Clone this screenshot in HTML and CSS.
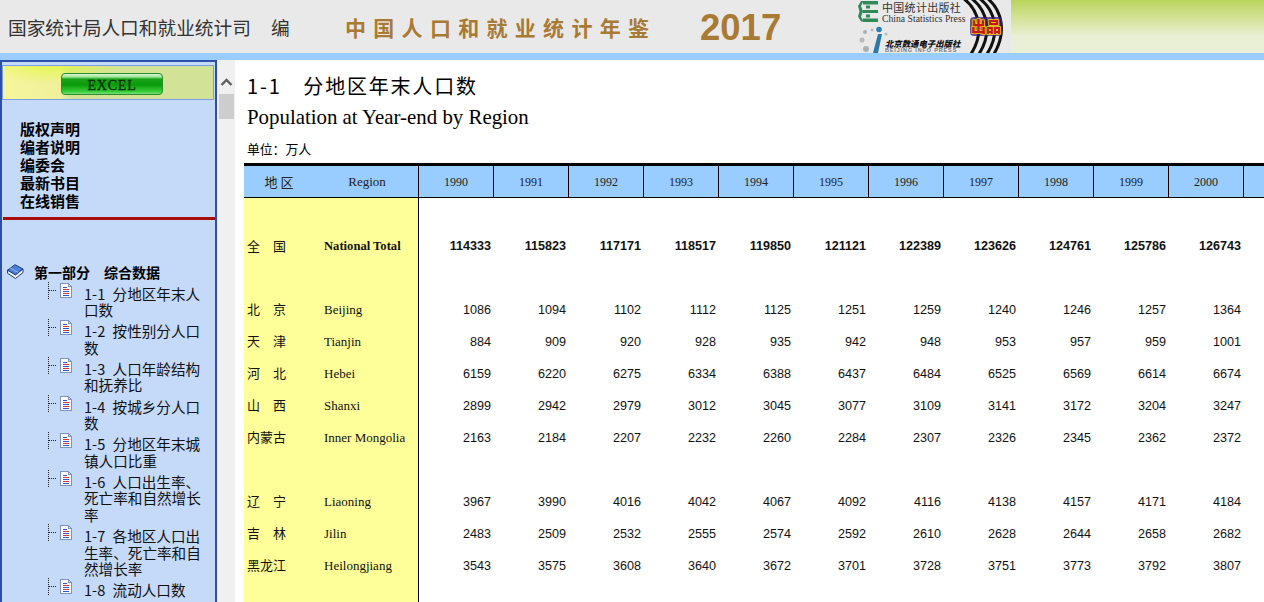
FILE: index.html
```html
<!DOCTYPE html>
<html lang="zh">
<head>
<meta charset="utf-8">
<title>中国人口和就业统计年鉴 2017</title>
<link rel="stylesheet" href="styles.css">
</head>
<body>
<svg class="defs" width="0" height="0" aria-hidden="true">
  <symbol id="doc" viewBox="0 0 26 18">
    <path d="M1.5 0v17M2 8.5h7" fill="none" stroke="#222" stroke-dasharray="1 1"/>
    <path d="M13.5 1.5h7.5l3 3v10.500h-10.500z" fill="#fff" stroke="#7d93c4"/>
    <path d="M21 1.500v3h3" fill="#cfdcf2" stroke="#7d93c4"/>
    <path d="M15.500 5.500h4" stroke="#2f55d4"/>
    <path d="M15.500 7.500h6.500" stroke="#e0303a"/>
    <path d="M15.500 9.500h6.500" stroke="#2f55d4"/>
    <path d="M15.500 11.500h6.500" stroke="#e0303a"/>
    <path d="M15.500 13.500h6.500" stroke="#2f55d4"/>
  </symbol>
</svg>
<header class="top">
  <div class="banner">
    <span class="editor">国家统计局人口和就业统计司<span class="editor-gap">编</span></span>
    <span class="yearbook">中国人口和就业统计年鉴</span>
    <span class="year">2017</span>
    <svg class="press" width="156" height="53" viewBox="0 0 156 53">
      <g fill="none" stroke="#111" stroke-width="3">
        <path d="M108 -2c16 12 22 34 8 56"/>
        <path d="M116 -2c16 12 22 34 8 56"/>
        <path d="M124 -2c16 12 22 34 8 56"/>
        <path d="M132 -2c15 12 20 34 7 56"/>
      </g>
      <g fill="#2f8a58">
        <path d="M8 1h15v3.500h-15zM8 10h15v3h-15zM8 18.500h15v3.500h-15z"/>
        <path d="M6 1h2.500l-2.500 5 2 5.500-2 5 2.500 5h-2.500l-3-5 1.500-5-1.500-5.500z"/>
        <path d="M11 5.500h4v3h-4zM11 14.500h4v3h-4z"/>
      </g>
      <text class="press-zh" x="27" y="12">中国统计出版社</text>
      <text class="press-en" x="27" y="22">China Statistics Press</text>
      <circle cx="11" cy="49" r="3" fill="#aab0b6"/>
      <circle cx="7" cy="40" r="2.500" fill="#b5babf"/>
      <circle cx="10" cy="32" r="2" fill="#aab0b6"/>
      <circle cx="17" cy="30" r="1.500" fill="#b5babf"/>
      <circle cx="24" cy="29.500" r="2.800" fill="#2c7fb5"/>
      <circle cx="31" cy="34" r="1.500" fill="#b5babf"/>
      <path d="M23 34h4l-4 19h-5z" fill="#2c78ad"/>
      <text class="press-bj" x="30" y="47">北京数通电子出版社</text>
      <text class="press-info" x="30" y="52">BEIJING INFO PRESS</text>
      <rect x="115" y="17" width="32" height="19" rx="4" fill="#3c1f80" opacity=".75"/>
      <text class="press-seal" x="116" y="32">出品</text>
    </svg>
  </div>
  <div class="banner-fill"></div>
</header>
<div class="strip"></div>
<div class="main">
  <aside class="side">
    <div class="excel-box"><a class="excel-btn">EXCEL</a></div>
    <nav class="links">
      <a>版权声明</a>
      <a>编者说明</a>
      <a>编委会</a>
      <a>最新书目</a>
      <a>在线销售</a>
    </nav>
    <hr class="rule">
    <div class="part">
      <svg width="17" height="16" viewBox="0 0 17 16">
        <path d="M8 .7l8 4.300-7.500 6-8-4.800z" fill="#4f7fd6" stroke="#1c3b80"/>
        <path d="M3 3.700l8 4.800" fill="none" stroke="#9dbcf0"/>
        <path d="M.5 6.200v3l8 5.300 7.500-6v-3.500l-7.500 6z" fill="#f2f5fd" stroke="#1c3b80"/>
      </svg>
      <b>第一部分　综合数据</b>
    </div>
    <ul class="tree">
      <li><svg class="twig"><use href="#doc"/></svg><span>1-1 分地区年末人口数</span></li>
      <li><svg class="twig"><use href="#doc"/></svg><span>1-2 按性别分人口数</span></li>
      <li><svg class="twig"><use href="#doc"/></svg><span>1-3 人口年龄结构和抚养比</span></li>
      <li><svg class="twig"><use href="#doc"/></svg><span>1-4 按城乡分人口数</span></li>
      <li><svg class="twig"><use href="#doc"/></svg><span>1-5 分地区年末城镇人口比重</span></li>
      <li><svg class="twig"><use href="#doc"/></svg><span>1-6 人口出生率、死亡率和自然增长率</span></li>
      <li><svg class="twig"><use href="#doc"/></svg><span>1-7 各地区人口出生率、死亡率和自然增长率</span></li>
      <li><svg class="twig"><use href="#doc"/></svg><span>1-8 流动人口数</span></li>
    </ul>
  </aside>
  <div class="scrollbar">
    <svg class="arrow" width="15" height="10" viewBox="0 0 15 10"><path d="M2.500 8l5-5 5 5" fill="none" stroke="#606060" stroke-width="2.400"/></svg>
    <div class="thumb"></div>
  </div>
  <main class="content">
    <h1>1-1　分地区年末人口数</h1>
    <h2>Population at Year-end by Region</h2>
    <p class="unit">单位：万人</p>
    <table class="data">
      <colgroup>
        <col class="c-zh"><col class="c-en">
        <col class="c-y"><col class="c-y"><col class="c-y"><col class="c-y"><col class="c-y"><col class="c-y">
        <col class="c-y"><col class="c-y"><col class="c-y"><col class="c-y"><col class="c-y"><col class="c-y">
      </colgroup>
      <thead>
        <tr>
          <th class="h-zh">地&nbsp;区</th><th class="h-en">Region</th>
          <th>1990</th><th>1991</th><th>1992</th><th>1993</th><th>1994</th><th>1995</th>
          <th>1996</th><th>1997</th><th>1998</th><th>1999</th><th>2000</th><th></th>
        </tr>
      </thead>
      <tbody>
        <tr class="total">
          <td class="zh">全　国</td><td class="en">National Total</td>
          <td>114333</td><td>115823</td><td>117171</td><td>118517</td><td>119850</td><td>121121</td>
          <td>122389</td><td>123626</td><td>124761</td><td>125786</td><td>126743</td><td></td>
        </tr>
        <tr>
          <td class="zh">北　京</td><td class="en">Beijing</td>
          <td>1086</td><td>1094</td><td>1102</td><td>1112</td><td>1125</td><td>1251</td>
          <td>1259</td><td>1240</td><td>1246</td><td>1257</td><td>1364</td><td></td>
        </tr>
        <tr>
          <td class="zh">天　津</td><td class="en">Tianjin</td>
          <td>884</td><td>909</td><td>920</td><td>928</td><td>935</td><td>942</td>
          <td>948</td><td>953</td><td>957</td><td>959</td><td>1001</td><td></td>
        </tr>
        <tr>
          <td class="zh">河　北</td><td class="en">Hebei</td>
          <td>6159</td><td>6220</td><td>6275</td><td>6334</td><td>6388</td><td>6437</td>
          <td>6484</td><td>6525</td><td>6569</td><td>6614</td><td>6674</td><td></td>
        </tr>
        <tr>
          <td class="zh">山　西</td><td class="en">Shanxi</td>
          <td>2899</td><td>2942</td><td>2979</td><td>3012</td><td>3045</td><td>3077</td>
          <td>3109</td><td>3141</td><td>3172</td><td>3204</td><td>3247</td><td></td>
        </tr>
        <tr>
          <td class="zh">内蒙古</td><td class="en">Inner Mongolia</td>
          <td>2163</td><td>2184</td><td>2207</td><td>2232</td><td>2260</td><td>2284</td>
          <td>2307</td><td>2326</td><td>2345</td><td>2362</td><td>2372</td><td></td>
        </tr>
        <tr>
          <td class="zh"></td><td class="en"></td>
          <td></td><td></td><td></td><td></td><td></td><td></td>
          <td></td><td></td><td></td><td></td><td></td><td></td>
        </tr>
        <tr>
          <td class="zh">辽　宁</td><td class="en">Liaoning</td>
          <td>3967</td><td>3990</td><td>4016</td><td>4042</td><td>4067</td><td>4092</td>
          <td>4116</td><td>4138</td><td>4157</td><td>4171</td><td>4184</td><td></td>
        </tr>
        <tr>
          <td class="zh">吉　林</td><td class="en">Jilin</td>
          <td>2483</td><td>2509</td><td>2532</td><td>2555</td><td>2574</td><td>2592</td>
          <td>2610</td><td>2628</td><td>2644</td><td>2658</td><td>2682</td><td></td>
        </tr>
        <tr>
          <td class="zh">黑龙江</td><td class="en">Heilongjiang</td>
          <td>3543</td><td>3575</td><td>3608</td><td>3640</td><td>3672</td><td>3701</td>
          <td>3728</td><td>3751</td><td>3773</td><td>3792</td><td>3807</td><td></td>
        </tr>
        <tr>
          <td class="zh"></td><td class="en"></td>
          <td></td><td></td><td></td><td></td><td></td><td></td>
          <td></td><td></td><td></td><td></td><td></td><td></td>
        </tr>
      </tbody>
    </table>
  </main>
</div>
</body>
</html>
```

FILE: styles.css
```css
* { box-sizing: border-box; }
html, body { height: 100%; }
body {
  margin: 0;
  overflow: hidden;
  background: #fff;
  color: #000;
  display: flex;
  flex-direction: column;
  font-family: "Noto Sans CJK SC", sans-serif;
}
.defs { position: absolute; }

/* Banner */
.top { display: flex; height: 53px; flex: none; }
.banner {
  width: 1011px;
  flex: none;
  background: #e9e9e9;
  display: flex;
  align-items: center;
  padding-left: 8px;
}
.banner-fill {
  flex: 1;
  background: linear-gradient(180deg, #b9d45c 0, #d3e296 18px, #e9efd4 36px, #eaf0d8 100%);
}
.editor { font-size: 18.7px; color: #333; width: 337px; flex: none; white-space: nowrap; }
.editor-gap { margin-left: 20px; }
.yearbook {
  font-size: 21px;
  font-weight: 700;
  letter-spacing: 7.300px;
  color: #a97a33;
  width: 355px;
  flex: none;
  white-space: nowrap;
}
.year {
  font-family: "Liberation Sans", sans-serif;
  font-size: 36.500px;
  font-weight: 700;
  color: #a97a33;
  width: 155px;
  flex: none;
  padding-top: 2px;
}
.press { flex: none; align-self: flex-start; }
.press-zh { font-family: "Noto Sans CJK SC", sans-serif; font-size: 11px; letter-spacing: .3px; fill: #333; }
.press-en { font-family: "Liberation Serif", serif; font-size: 9.700px; fill: #333; }
.press-bj { font-family: "Noto Sans CJK SC", sans-serif; font-size: 8.400px; font-weight: 900; font-style: italic; fill: #111; }
.press-info { font-family: "Liberation Sans", sans-serif; font-size: 5.500px; font-weight: 700; letter-spacing: .85px; fill: #777; }
.press-seal { font-family: "Noto Sans CJK SC", sans-serif; font-size: 15px; font-weight: 900; fill: #c8161d; stroke: #f6d400; stroke-width: 1.500px; paint-order: stroke; }
.strip { height: 7px; flex: none; background: #99ccff; }

/* Main */
.main { flex: 1; display: flex; min-height: 0; }
.side {
  width: 217px;
  flex: none;
  overflow: hidden;
  background: #c5d9f9;
  border: 2px solid #2c50a4;
  border-bottom: 0;
  border-width: 2px 2px 0 2px;
  padding-top: 3px;
}
.excel-box {
  height: 35px;
  width: 212px;
  border: 1px solid #7d9ee8;
  background:
    radial-gradient(ellipse 70px 22px at 50px -4px, #e2f745 0, rgba(226, 247, 69, 0) 100%),
    linear-gradient(90deg, #f6f69c 0, #f0f09c 27%, #d3e396 32%, #d2e296 100%);
  display: flex;
  justify-content: flex-start;
  align-items: flex-start;
  padding: 7px 0 0 58px;
}
.excel-btn {
  width: 102px;
  height: 22px;
  border: 1px solid #2d8a2d;
  border-radius: 4px;
  background: linear-gradient(180deg, #d9f7d3 0, #9ce596 15%, #1aa31a 25%, #0a9a0a 55%, #3fd03f 90%, #7fe07f 100%);
  color: #062c06;
  font: 400 14px/23px "Liberation Serif", serif;
  -webkit-text-stroke: .3px #062c06;
  letter-spacing: .8px;
  text-align: center;
}
.links {
  display: flex;
  flex-direction: column;
  padding: 21px 0 0 18px;
  font-family: "Liberation Sans", "Noto Sans CJK SC", sans-serif;
  font-size: 15px;
  line-height: 18px;
  font-weight: 700;
}
.rule { height: 2.500px; margin: 6px 0 0 1px; width: 212px; border: 0; background: #a80c0c; }
.part {
  display: flex;
  align-items: center;
  gap: 10px;
  margin: 43px 0 0 5px;
  font-size: 14px;
  line-height: 18px;
}
.part b { white-space: nowrap; }
.tree { list-style: none; margin: 0; padding: 5px 0 0 45px; font-size: 14.600px; line-height: 16.500px; color: #111; }
.tree li { display: flex; padding-bottom: 4.700px; }
.twig { width: 26px; height: 18px; flex: none; margin: -4px 11px 0 0; shape-rendering: crispEdges; }
.tree span { width: 118px; flex: none; word-spacing: 4px; }

/* Fake scrollbar */
.scrollbar {
  width: 18px;
  flex: none;
  background: #f0f0f0;
  display: flex;
  flex-direction: column;
  align-items: center;
  padding-top: 17px;
}
.arrow { flex: none; }
.thumb { width: 15px; height: 25px; margin-top: 7px; background: #cdcdcd; }

/* Content */
.content { flex: 1; min-width: 0; overflow: hidden; padding-left: 9px; }
.content h1 {
  margin: 0;
  padding: 12px 0 0 3px;
  font-size: 20px;
  line-height: 28px;
  font-weight: 400;
  letter-spacing: 1.800px;
  white-space: nowrap;
}
.content h2 {
  margin: 3px 0 0;
  padding-left: 3px;
  font: 400 20.870px/28px "Liberation Serif", serif;
  white-space: nowrap;
}
.unit { margin: 9px 0 0; padding-left: 3px; font-size: 12.800px; line-height: 18px; }
.data {
  margin-top: 5px;
  width: 1074px;
  table-layout: fixed;
  border-collapse: separate;
  border-spacing: 0;
}
.c-zh { width: 80px; }
.c-en { width: 94px; }
.c-y { width: 75px; }
.data th {
  height: 35px;
  background: #99ccff;
  border-top: 3px solid #000;
  border-bottom: 1px solid #000;
  border-left: 1px solid #000;
  padding: 0;
  font: 400 12px/16px "Liberation Serif", serif;
  color: #222;
}
.data th.h-zh, .data th.h-en { border-left: 0; }
.data th.h-zh { font-family: "Noto Sans CJK SC", sans-serif; font-size: 13px; padding-right: 10px; }
.data th.h-en { padding-right: 8px; font-size: 13px; }
.data td {
  height: 32px;
  padding: 1px 2px 0 0;
  font: 400 12.600px/16px "Liberation Sans", sans-serif;
  text-align: right;
  color: #111;
  white-space: nowrap;
}
.data td:nth-child(3) { border-left: 1px solid #000; }
.data td.zh, .data td.en { text-align: left; background: #ffff99; padding: 1px 0 0; }
.data td.zh { font-family: "Noto Sans CJK SC", sans-serif; font-size: 13px; padding: 0 0 0 3px; }
.data td.en { font-family: "Liberation Serif", serif; font-size: 13px; }
.total td { height: 95px; font-weight: 700; }
.total td.zh { font-weight: 400; }
.total td.en { font-size: 12.600px; }
```
